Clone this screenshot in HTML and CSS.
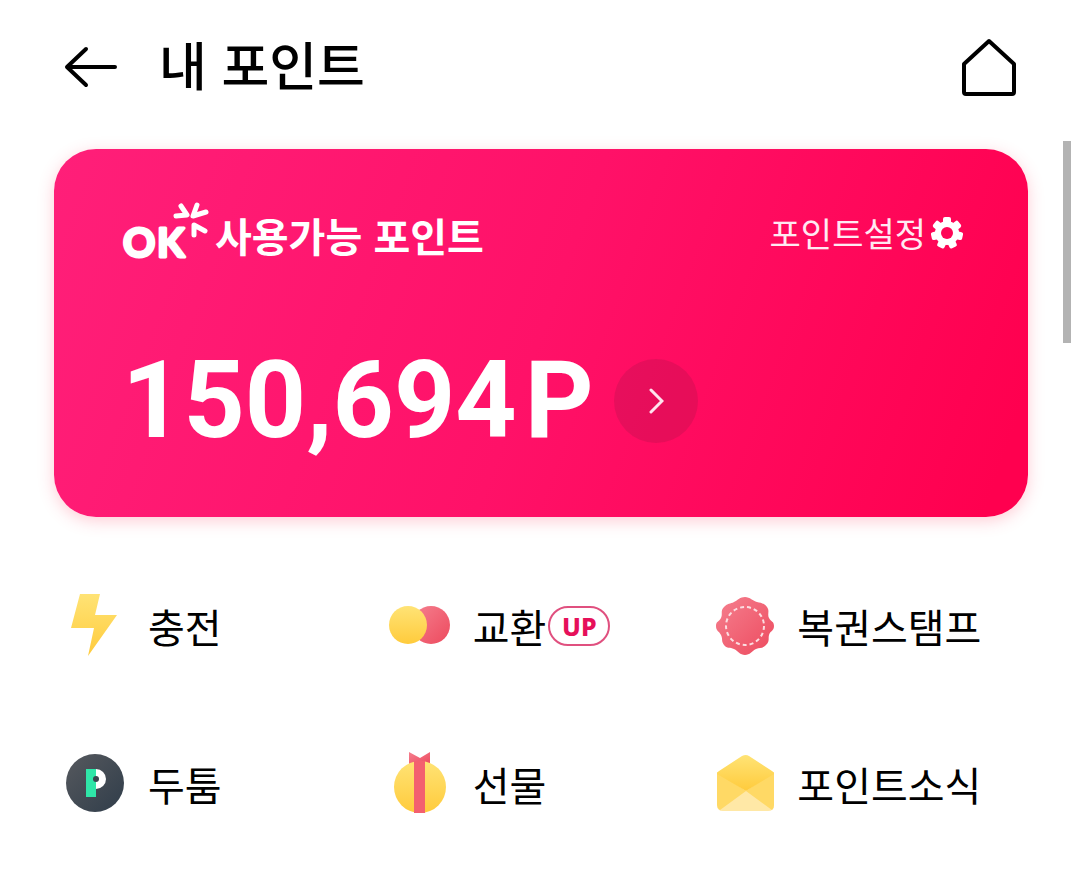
FILE: index.html
```html
<!DOCTYPE html>
<html lang="ko">
    <head>
        <meta charset="utf-8">
        <meta name="viewport" content="width=device-width, initial-scale=1">
        <title>내 포인트</title>
        <link rel="stylesheet" href="styles.css">
    </head>
    <body>
        <header class="header">
            <a class="header-link" href="#" aria-label="뒤로">
                <svg width="56" height="44" viewBox="0 0 56 44" fill="none" stroke="#000" stroke-width="4" stroke-linecap="round" stroke-linejoin="round">
                    <path d="M23 4 4 22l19 18M5 22h47"/>
                </svg>
            </a>
            <h1 class="title">내 포인트</h1>
            <a class="header-link" href="#" aria-label="홈">
                <svg width="56" height="60" viewBox="0 0 56 60" fill="none" stroke="#000" stroke-width="4" stroke-linejoin="round">
                    <path d="M28 4 53 27v28q0 2-2 2H5q-2 0-2-2V27z"/>
                </svg>
            </a>
        </header>

        <main>
            <section class="card">
                <div class="card-top">
                    <h2 class="card-title">
                        <svg class="logo" width="90" height="68" viewBox="0 0 90 68" fill="none" stroke="#fff" stroke-linecap="round" stroke-linejoin="round">
                            <text class="logo-text" x="1 35" y="56">OK</text>
                            <g stroke-width="5">
                                <path d="M59 5l6 9-11 1"/>
                                <path d="M75 4l-4 11 13-4"/>
                                <path d="M72 34V24l11 6"/>
                            </g>
                        </svg>
                        <span>사용가능 포인트</span>
                    </h2>
                    <a class="setting" href="#">
                        포인트설정
                        <svg width="34" height="34" viewBox="-17 -17 34 34">
                            <g fill="#fff">
                                <circle r="12"/>
                                <rect id="tooth" x="-4" y="-16" width="8" height="9" rx="2"/>
                                <use href="#tooth" transform="rotate(51.4)"/>
                                <use href="#tooth" transform="rotate(102.9)"/>
                                <use href="#tooth" transform="rotate(154.3)"/>
                                <use href="#tooth" transform="rotate(205.7)"/>
                                <use href="#tooth" transform="rotate(257.1)"/>
                                <use href="#tooth" transform="rotate(308.6)"/>
                            </g>
                            <circle r="6" fill="#ff0556"/>
                        </svg>
                    </a>
                </div>
                <div class="point">
                    <strong class="point-num">150,694</strong>
                    <span class="point-unit">P</span>
                    <button class="point-btn" type="button" aria-label="포인트 내역">
                        <svg width="16" height="28" viewBox="0 0 16 28" fill="none" stroke="#ffe3ee" stroke-width="3" stroke-linecap="round">
                            <path d="M3 3l11 11L3 25"/>
                        </svg>
                    </button>
                </div>
            </section>

            <nav class="menu">
                <a class="menu-item" href="#">
                    <svg class="menu-icon" viewBox="0 0 80 64">
                        <defs>
                            <linearGradient id="yellow" x1="0" y1="0" x2="0" y2="1">
                                <stop offset="0" stop-color="#ffe375"/>
                                <stop offset="1" stop-color="#ffcb3c"/>
                            </linearGradient>
                            <linearGradient id="pink" x1="0" y1="0" x2="1" y2="1">
                                <stop offset="0" stop-color="#f5808f"/>
                                <stop offset="1" stop-color="#ed4a5e"/>
                            </linearGradient>
                            <linearGradient id="dark" x1="0" y1="0" x2="1" y2="1">
                                <stop offset="0" stop-color="#56595e"/>
                                <stop offset="1" stop-color="#303d4a"/>
                            </linearGradient>
                        </defs>
                        <path fill="url(#yellow)" d="M25 0h20l-5 21h22L33 62l6-28H16z"/>
                    </svg>
                    충전
                </a>
                <a class="menu-item" href="#">
                    <svg class="menu-icon" viewBox="0 0 80 64">
                        <circle cx="51" cy="31" r="19" fill="url(#pink)"/>
                        <circle cx="28" cy="31" r="19" fill="url(#yellow)"/>
                    </svg>
                    <span>교환</span>
                    <span class="badge">UP</span>
                </a>
                <a class="menu-item" href="#">
                    <svg class="menu-icon" viewBox="0 0 80 64">
                        <path fill="url(#pink)" d="M41 3C46 3 49 7 53 8S60 9 63 13 63 20 65 24 70 27 70 32 66 37 65 41 66 47 62 51 56 53 52 55 46 61 41 61 34 57 30 55 23 55 20 51 19 45 17 41 12 37 12 32 15 28 17 24 16 17 20 13 26 10 30 8 36 3 41 3Z"/>
                        <circle cx="41" cy="32" r="19" fill="none" stroke="#fbdde1" stroke-width="2" stroke-dasharray="4 3"/>
                    </svg>
                    복권스탬프
                </a>
                <a class="menu-item" href="#">
                    <svg class="menu-icon" viewBox="0 0 80 64">
                        <circle cx="40" cy="31" r="29" fill="url(#dark)"/>
                        <path fill="#fff" d="M41 17a10 10 0 0 1 0 20z"/>
                        <path fill="#2fe6a8" d="M31 17h10v28H31z"/>
                        <circle cx="41" cy="27" r="3" fill="#3a444e"/>
                    </svg>
                    두툼
                </a>
                <a class="menu-item" href="#">
                    <svg class="menu-icon" viewBox="0 0 80 64">
                        <path fill="url(#pink)" d="M29 0l11 6 10-6v12H29z"/>
                        <circle cx="40" cy="35" r="26" fill="url(#yellow)"/>
                        <path fill="#f3606f" d="M34 9h11v52H34z"/>
                    </svg>
                    선물
                </a>
                <a class="menu-item" href="#">
                    <svg class="menu-icon" viewBox="0 0 80 64">
                        <path fill="#ffe8a6" d="M13 22l29 17 28-17v31q0 6-6 6H19q-6 0-6-6z"/>
                        <path fill="#ffd965" d="M13 20l29 19-26 19q-3-2-3-5zM70 20L42 39l26 19q2-2 2-5z"/>
                        <path fill="url(#yellow)" d="M13 22q0-2 2-3L38 4q4-2 7 0l23 15q2 1 2 3L42 39z"/>
                    </svg>
                    포인트소식
                </a>
            </nav>
        </main>
        <div class="scrollbar"></div>
    </body>
</html>
```

FILE: styles.css
```css
* {
    box-sizing: border-box;
}
body {
    margin: 0;
    background-color: #fff;
    color: #000;
    font-family: "Noto Sans CJK KR", sans-serif;
}
a {
    color: inherit;
    text-decoration: none;
}
h1, h2 {
    margin: 0;
}
svg {
    flex: none;
}
.header {
    display: flex;
    align-items: center;
    height: 133px;
    padding: 0 63px 0 63px;
}
.header-link {
    display: flex;
}
.title {
    flex: 1;
    margin-bottom: 6px;
    margin-left: 40px;
    font-size: 52px;
    font-weight: 500;
    line-height: 64px;
}
.card {
    margin: 16px 52px 0 54px;
    padding: 52px 64px 66px 68px;
    border-radius: 42px;
    background: linear-gradient(110deg, #ff1f79 0%, #ff1168 50%, #ff004f 96%);
    box-shadow: 0 4px 16px rgba(255, 60, 90, 0.25);
    color: #fff;
}
.card-top {
    display: flex;
    justify-content: space-between;
    align-items: flex-start;
}
.card-title {
    display: flex;
    gap: 3px;
    font-size: 40px;
    font-weight: 700;
    line-height: 68px;
}
.logo-text {
    fill: #fff;
    stroke-width: 3px;
    font-family: Lato, sans-serif;
    font-size: 40px;
    font-weight: 700;
}
.setting {
    display: flex;
    align-items: center;
    gap: 4px;
    color: #ffe9f2;
    font-size: 34px;
    font-weight: 400;
    line-height: 64px;
}
.point {
    display: flex;
    align-items: center;
    margin-top: 82px;
    font-family: Roboto, sans-serif;
    font-size: 107px;
    line-height: 100px;
}
.point-num {
    font-weight: 700;
}
.point-unit {
    margin-left: 8px;
    font-weight: 700;
}
.point-btn {
    display: flex;
    justify-content: center;
    align-items: center;
    width: 84px;
    height: 84px;
    margin-left: 20px;
    padding: 0;
    border: 0;
    border-radius: 50%;
    background-color: rgba(120, 20, 60, 0.18);
}
.menu {
    display: grid;
    grid-template-columns: repeat(3, 1fr);
    row-gap: 94px;
    margin: 77px 51px 0 55px;
}
.menu-item {
    display: flex;
    align-items: center;
    height: 64px;
    font-size: 40px;
    line-height: 64px;
    white-space: nowrap;
}
.menu-icon {
    width: 80px;
    height: 64px;
    margin-right: 13px;
}
.badge {
    width: 62px;
    height: 40px;
    margin-left: 2px;
    border: 2px solid #e0507f;
    border-radius: 20px;
    color: #e6105a;
    font-family: "Noto Sans", sans-serif;
    font-size: 25px;
    font-weight: 800;
    line-height: 36px;
    text-align: center;
}
.scrollbar {
    position: absolute;
    top: 141px;
    right: 9px;
    width: 8px;
    height: 202px;
    background-color: #b3b3b3;
}
```
